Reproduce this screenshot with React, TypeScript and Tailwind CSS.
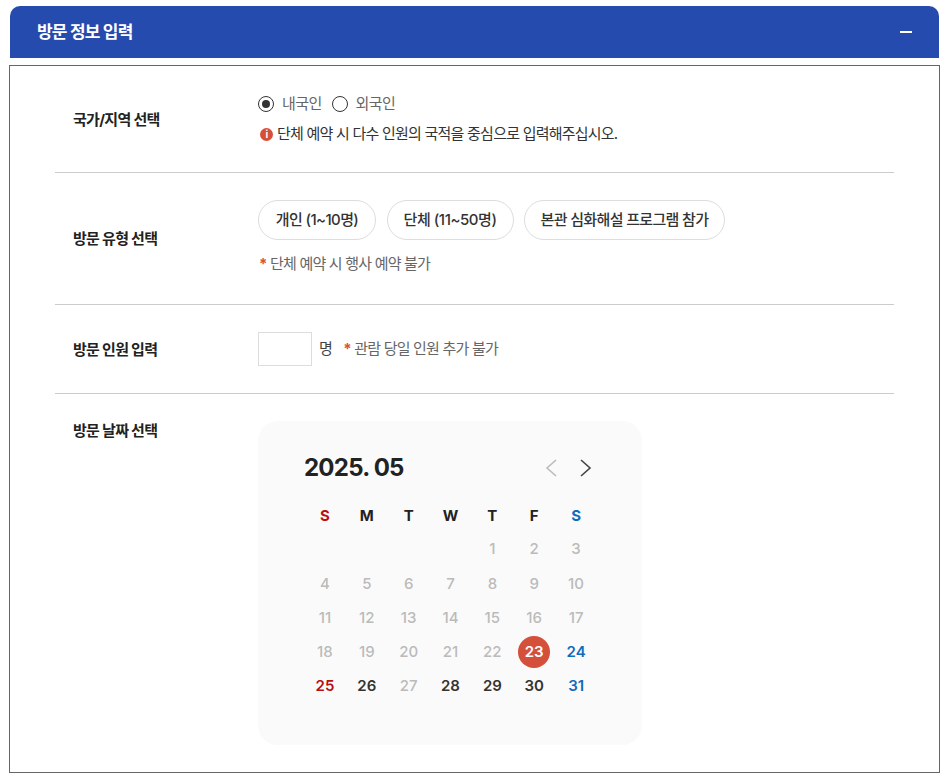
const FONT = "font-['Inter','Noto_Sans_CJK_KR',sans-serif]";

const CELLS: (number | null)[] = [null, null, null, null];
for (let d = 1; d <= 31; d++) CELLS.push(d);

function dayClass(d: number) {
  if (d === 23) return "h-8 w-8 rounded-full bg-[#d4503a] font-semibold text-white";
  if (d === 24 || d === 31) return "font-semibold text-[#0f6cbd]";
  if (d === 25) return "font-semibold text-[#b80f0f]";
  if (d === 26 || d === 28 || d === 29 || d === 30) return "font-semibold text-[#333]";
  return "font-medium text-[#bbb]";
}

function Row({ label, className, labelClass, children }: { label: string; className: string; labelClass?: string; children: React.ReactNode }) {
  return (
    <div className={`flex ${className}`}>
      <div className={`w-[203px] shrink-0 pl-[18px] text-[15px] font-bold tracking-[-0.7px] text-[#222] ${labelClass ?? "self-center"}`}>
        {label}
      </div>
      <div className="min-w-0 flex-1">{children}</div>
    </div>
  );
}

function Radio({ on, label }: { on?: boolean; label: string }) {
  return (
    <label className="flex items-center gap-[8px]">
      <span className="flex h-4 w-4 items-center justify-center rounded-full border border-[#333] bg-white">
        {on ? <span className="h-2 w-2 rounded-full bg-[#333]" /> : null}
      </span>
      <span className="text-[15px] tracking-[-0.6px] text-[#666]">{label}</span>
    </label>
  );
}

function Pill({ className, children }: { className: string; children: React.ReactNode }) {
  return (
    <button type="button" className={`h-10 rounded-full border border-[#ddd] bg-white text-[15px] font-medium tracking-[-0.6px] text-[#333] ${className}`}>
      {children}
    </button>
  );
}

export default function App() {
  return (
    <div className={`${FONT} h-[779px] overflow-hidden bg-white pt-[6px] pl-[10px]`}>
      <div className="flex h-[52px] w-[929px] items-center justify-between rounded-t-[10px] bg-[#264bae] pr-[27px] pl-[27px]">
        <h2 className="pt-px text-[17px] font-bold tracking-[-0.8px] text-white">방문 정보 입력</h2>
        <span className="h-[2px] w-3 bg-white" />
      </div>

      <div className="mt-[7px] -ml-px h-[708px] w-[931px] border border-[#666] bg-white px-[45px]">
        <Row label="국가/지역 선택" className="h-[107px] border-b border-[#ccc] pt-[28px] pb-[26px]">
          <div className="flex items-center gap-[10px] leading-[19px]">
            <Radio on label="내국인" />
            <Radio label="외국인" />
          </div>
          <div className="mt-[11px] flex items-center gap-[4px] text-[15px] leading-[20px] tracking-[-0.77px] text-[#333]">
            <span className="ml-[2px] flex h-[13px] w-[13px] items-center justify-center rounded-full bg-[#d4503a] text-[10px] leading-none font-bold text-white">
              i
            </span>
            단체 예약 시 다수 인원의 국적을 중심으로 입력해주십시오.
          </div>
        </Row>

        <Row label="방문 유형 선택" className="h-[132px] border-b border-[#ccc] pt-[27px]" labelClass="mt-[28px] self-start">
          <div className="flex gap-[10.5px]">
            <Pill className="w-[118px]">개인 (1~10명)</Pill>
            <Pill className="w-[127px] tracking-[-0.45px]">단체 (11~50명)</Pill>
            <Pill className="w-[201px] tracking-[-0.65px]">본관 심화해설 프로그램 참가</Pill>
          </div>
          <p className="mt-[13px] text-[15px] leading-[22px] tracking-[-0.8px] text-[#666]">
            <span className="ml-[1px] font-bold text-[#d9532f]">*</span> 단체 예약 시 행사 예약 불가
          </p>
        </Row>

        <Row label="방문 인원 입력" className="h-[89px] border-b border-[#ccc] pt-[1px]" labelClass="self-center pt-px">
          <div className="flex h-full items-center">
            <input className="-mt-px h-[34px] w-[54px] border border-[#ddd] bg-white" aria-label="방문 인원" />
            <span className="ml-[7px] text-[15px] tracking-[-0.6px] text-[#444]">명</span>
            <span className="ml-[11px] text-[15px] tracking-[-0.8px] text-[#666]">
              <span className="font-bold text-[#d9532f]">*</span> 관람 당일 인원 추가 불가
            </span>
          </div>
        </Row>

        <Row label="방문 날짜 선택" className="pt-[27px]" labelClass="self-start leading-[20px]">
          <div className="h-[324px] w-[384px] rounded-[20px] bg-[#fafafa] pt-[32px] pl-[46px]">
            <div className="flex h-[30px] w-[298px] items-center justify-between">
              <span className="text-[24px] font-bold tracking-[-0.75px] text-[#222]">2025. 05</span>
              <div className="mr-[10px] flex items-center gap-[23px]">
                <svg width="12" height="18" viewBox="0 0 12 18" fill="none" stroke="#bbb" strokeWidth="1.6">
                  <path d="M11 1 2 9l9 8" />
                </svg>
                <svg width="12" height="18" viewBox="0 0 12 18" fill="none" stroke="#444" strokeWidth="1.6">
                  <path d="M1 1l9 8-9 8" />
                </svg>
              </div>
            </div>
            <div className="mt-[23px] grid w-[293px] grid-cols-7 text-[15px]">
              {["S", "M", "T", "W", "T", "F", "S"].map((d, i) => (
                <div
                  key={i}
                  className={`flex h-[20px] items-center justify-center font-bold ${i === 0 ? "text-[#b80f0f]" : i === 6 ? "text-[#0f6cbd]" : "text-[#222]"}`}
                >
                  {d}
                </div>
              ))}
            </div>
            <div className="mt-[6.4px] grid w-[293px] auto-rows-[34.3px] grid-cols-7 text-[15px]">
              {CELLS.map((d, i) => (
                <div key={i} className="flex items-center justify-center">
                  {d ? <span className={`flex items-center justify-center ${dayClass(d)}`}>{d}</span> : null}
                </div>
              ))}
            </div>
          </div>
        </Row>
      </div>
    </div>
  );
}
